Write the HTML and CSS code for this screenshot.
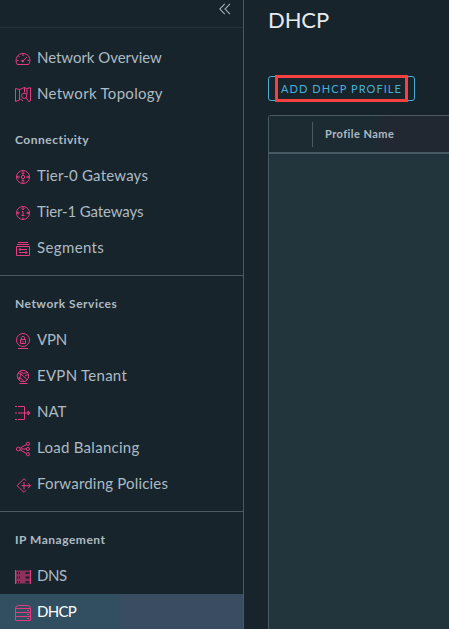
FILE: index.html
```html
<!DOCTYPE html>
<html lang="en">
<head>
<meta charset="utf-8">
<title>DHCP</title>
<link rel="stylesheet" href="styles.css">
</head>
<body>
<div class="app">
  <nav class="sidebar">
    <div class="collapse"><svg class="chevrons" viewBox="0 0 12 12"><path d="M5.8.8.8 6l5 5.2M11 .8 6 6l5 5.2"/></svg></div>
    <section class="group first">
      <a class="item"><svg class="icon" viewBox="0 0 16 16"><path d="M2.200 13.500C-.8 8 2.500 2.500 8 2.500s8.800 5.500 5.800 11zM8 3v2M3.500 5l1 1M1.500 9.500h2M12.500 9.500h2M8 10l4-4"/><circle class="solid" cx="7.700" cy="10" r="1.300"/></svg><span class="overview">Network Overview</span></a>
      <a class="item"><svg class="icon" viewBox="0 0 16 16"><path d="M6 11.500 4.500 13 .5 14.500V1.500l4 1 5-2 2 1 4-.8v13l-2 .8M4.500 2.500V13M9.500.5v5M12 1.500v6M11 11l3 3.500M6 12.500l2 1.500"/><circle cx="9.200" cy="8.800" r="2.600"/></svg><span class="topology">Network Topology</span></a>
    </section>
    <section class="group">
      <h2 class="heading connectivity">Connectivity</h2>
      <a class="item"><svg class="icon" viewBox="0 0 16 16"><circle cx="8" cy="8" r="6.500"/><circle cx="8" cy="8" r="1.700"/><path d="M8 2v3M6.500 4 8 5.300 9.500 4M8 14v-3M6.500 12 8 10.700 9.500 12M2 8h2.800M3.500 6.800 2.300 8l1.200 1.200M14 8h-2.800M12.500 6.800 13.700 8l-1.200 1.200"/></svg><span class="tier0">Tier-0 Gateways</span></a>
      <a class="item"><svg class="icon" viewBox="0 0 16 16"><circle cx="8" cy="8" r="6.500"/><path d="M6.800 6.500H8v4M6.500 10.500h3M8 2v2M6.500 3.500 8 4.700l1.500-1.200M8 14v-1.500M2 8h2.800M3.500 6.800 2.300 8l1.200 1.200M14 8h-2.800M12.500 6.800 13.700 8l-1.200 1.200"/></svg><span class="tier1">Tier-1 Gateways</span></a>
      <a class="item"><svg class="icon" viewBox="0 0 16 16"><path d="M3 1.500h10M2 3.500h12M1.500 5.500h13v9h-13zM4 8.500h8M5.500 7 4 8.500 5.500 10M4 11.500h8M10.500 10l1.500 1.500-1.500 1.500"/></svg><span class="segments">Segments</span></a>
    </section>
    <section class="group ruled">
      <h2 class="heading services">Network Services</h2>
      <a class="item"><svg class="icon" viewBox="0 0 16 16"><circle cx="8" cy="7" r="6.500"/><path d="M5.500 6.500h5v4h-5zM6.500 6.500V4.500q0-1 1.500-1t1.500 1v2M8 8v1.500M3 15.500h10"/></svg><span class="vpn">VPN</span></a>
      <a class="item"><svg class="icon" viewBox="0 0 16 16"><circle cx="8" cy="7" r="5.700"/><path d="M3 4.500 6 5l6 5.500M6 5 4.500 10M5 2.500Q8 6 12.500 3.500M10 7l3-1.500M2.500 9q4-1 6 3M4.500 14.500h8"/><circle class="solid" cx="5.700" cy="5" r=".8"/><circle class="solid" cx="4.700" cy="10" r=".8"/></svg><span class="evpn">EVPN Tenant</span></a>
      <a class="item"><svg class="icon" viewBox="0 0 16 16"><path d="M0 1.500h2M3 1.500h6.500v13H3M0 14.500h2M0 8h2M3 8h12M13 6l2.200 2L13 10z"/></svg><span class="nat">NAT</span></a>
      <a class="item"><svg class="icon" viewBox="0 0 16 16"><circle cx="3.300" cy="8" r="1.900"/><circle cx="12.900" cy="2.800" r="1.600"/><circle cx="12.900" cy="8" r="1.600"/><circle cx="12.900" cy="13.200" r="1.600"/><path d="m5.200 7 6.200-3.500M5.200 8h6M5.200 9l6.200 3.500"/></svg><span class="load">Load Balancing</span></a>
      <a class="item"><svg class="icon" viewBox="0 0 16 16"><path d="M11 3.700 9 1.700 2 8.700l7 6.600 2-2M9 5v7.500M6.500 8.700h8.800M13 6.200l2.500 2.500-2.500 2.500"/></svg><span class="forwarding">Forwarding Policies</span></a>
    </section>
    <section class="group ruled">
      <h2 class="heading management">IP Management</h2>
      <a class="item"><svg class="icon" viewBox="0 0 16 16"><path class="shade" d="M1 1.500h14v13H1z"/><path d="M.5 1v14M15.500 1v14"/><path class="slots" d="M2.500 3v11M4.500 3v11M12.500 3v11" stroke-dasharray="2 2.500"/><path class="slots wide" d="M12.500 3v11" stroke-dasharray="2 2.500"/></svg><span class="dns">DNS</span></a>
      <a class="item active"><svg class="icon" viewBox="0 0 16 16"><path d="M.5 3.500q0-3 3-3h9q3 0 3 3v12H.5zM.5 3.500h15M.5 7.500h15M.5 11.500h15M12 5.500h2M12 9.500h2M12 13.500h2"/></svg><span class="dhcp">DHCP</span></a>
    </section>
  </nav>
  <main class="content">
    <h1 class="title">DHCP</h1>
    <button class="add"><span class="add-label">ADD DHCP PROFILE</span></button>
    <div class="grid">
      <div class="grid-head"><span class="select-cell"></span><span class="name-cell">Profile Name</span></div>
      <div class="grid-body"></div>
    </div>
  </main>
</div>
</body>
</html>
```
FILE: styles.css
```css
*, *::after { box-sizing: border-box; }
body {
  margin: 0;
  overflow: hidden;
  background: #18242b;
  color: #adbbc4;
  font-family: Lato, "Liberation Sans", sans-serif;
}
.app { display: flex; height: 629px; }
.sidebar {
  flex: none;
  width: 244px;
  border-right: 1px solid #495a65;
  overflow: hidden;
}
.collapse {
  display: flex;
  justify-content: flex-end;
  height: 28px;
  padding: 3px 12px 0 0;
  border-bottom: 1px solid #24323a;
}
.chevrons { width: 12px; height: 12px; fill: none; stroke: #9aabb5; stroke-width: 1.1; }
.group { padding-bottom: 9px; }
.group.first { padding: 12px 0 10px; }
.group.ruled { border-top: 1px solid #495a65; padding-top: 10px; }
.heading {
  margin: 0;
  height: 36px;
  padding-left: 15px;
  line-height: 35px;
  font-size: 12px;
  font-weight: 700;
  letter-spacing: .5px;
  white-space: nowrap;
}
.item {
  display: flex;
  align-items: center;
  gap: 6px;
  height: 36px;
  padding-left: 15px;
  font-size: 15px;
  white-space: nowrap;
}
.item span { height: 36px; line-height: 34px; }
.overview { letter-spacing: -.04px; }
.topology { letter-spacing: .3px; }
.tier0 { letter-spacing: .2px; }
.tier1 { letter-spacing: -.12px; }
.segments { letter-spacing: .38px; }
.vpn { letter-spacing: -.15px; }
.evpn { letter-spacing: .27px; }
.load { letter-spacing: .28px; }
.forwarding { letter-spacing: .19px; }
.dns { letter-spacing: -.4px; }
.dhcp { letter-spacing: -.7px; }
.icon {
  width: 16px;
  height: 16px;
  margin-top: 2px;
  fill: none;
  stroke: #e83a82;
  stroke-width: 1;
}
.solid { fill: #e83a82; stroke: none; }
.shade { fill: #8b315c; stroke: none; }
.slots { stroke: #19242b; stroke-width: 1; }
.slots.wide { stroke-width: 4; }
.active {
  background: linear-gradient(90deg, #324f61 120px, #394c61 120px);
  color: #fff;
}
.content { flex: 1; min-width: 0; padding-left: 24px; display: flex; flex-direction: column; }
.title {
  margin: 6px 0 0;
  height: 28px;
  line-height: 28px;
  font-size: 22px;
  font-weight: 400;
  letter-spacing: -.1px;
  color: #e6ebee;
}
.add {
  position: relative;
  width: 147px;
  height: 25px;
  margin-top: 42px;
  padding: 0 0 0 12px;
  border: 1px solid #49afd9;
  border-radius: 3px;
  background: transparent;
  color: #49afd9;
  font: 11px/22px Lato, sans-serif;
  letter-spacing: 1.08px;
  text-align: left;
  white-space: nowrap;
}
.add::after {
  content: "";
  position: absolute;
  left: 6px;
  top: -2px;
  width: 133px;
  height: 27px;
  border: 3px solid #f94040;
}
.grid {
  flex: 1;
  margin-top: 14px;
  border: 1px solid #495a65;
  border-right: 0;
  border-bottom: 0;
  border-radius: 3px 0 0 0;
  display: flex;
  flex-direction: column;
}
.grid-head {
  display: flex;
  align-items: center;
  height: 38px;
  border-bottom: 2px solid #495a65;
  background: linear-gradient(90deg, #1c2a32 105px, #222831 120px);
}
.select-cell { width: 44px; height: 25px; border-right: 1px solid #495a65; }
.name-cell { margin: -2px 0 0 12px; font-size: 11px; font-weight: 700; letter-spacing: .45px; }
.grid-body { flex: 1; background: #22343c; }
```
